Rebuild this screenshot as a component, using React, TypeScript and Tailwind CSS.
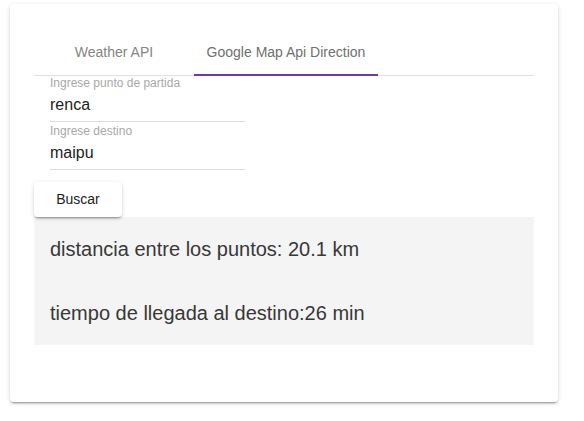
import { useState } from 'react'

const TABS = [
  { label: 'Weather API', width: 'w-[160px]' },
  { label: 'Google Map Api Direction', width: 'w-[184px]' },
]

export default function App() {
  const [tab, setTab] = useState(1)
  const [origin, setOrigin] = useState('renca')
  const [dest, setDest] = useState('maipu')

  return (
    <div className="min-h-screen bg-white pl-[10px] pt-[4px] font-['Liberation_Sans',Arial,sans-serif]">
      <div className="w-[548px] h-[398px] rounded-[4px] bg-white px-[24px] pt-[24px] shadow-[0_3px_1px_-2px_rgba(0,0,0,0.2),0_2px_2px_0_rgba(0,0,0,0.14),0_1px_5px_0_rgba(0,0,0,0.12)]">
        {/* Tabs */}
        <div className="flex h-[48px] w-[500px] border-b border-[#e0e0e0]">
          {TABS.map((t, i) => (
            <button
              key={t.label}
              onClick={() => setTab(i)}
              className={`relative h-full ${t.width} text-[14px] leading-[16px] ${
                tab === i ? 'text-[#707070]' : 'text-[#858585]'
              }`}
            >
              {t.label}
              {tab === i && (
                <span className="absolute left-0 right-0 bottom-[-1px] h-[2px] bg-[#673ab7]" />
              )}
            </button>
          ))}
        </div>

        {/* Inputs */}
        <div className="ml-[16px] w-[195px] flex flex-col">
          <label className="text-[12px] leading-[14px] text-[#a8a8a8]">Ingrese punto de partida</label>
          <input
            value={origin}
            onChange={(e) => setOrigin(e.target.value)}
            className="h-[32px] pt-[4px] pb-[6px] border-b border-[#dcdcdc] text-[16px] leading-[18px] text-[#222] outline-none bg-transparent"
          />
          <label className="mt-[2px] text-[12px] leading-[14px] text-[#a8a8a8]">Ingrese destino</label>
          <input
            value={dest}
            onChange={(e) => setDest(e.target.value)}
            className="h-[32px] pt-[4px] pb-[6px] border-b border-[#dcdcdc] text-[16px] leading-[18px] text-[#222] outline-none bg-transparent"
          />
        </div>

        <button className="relative z-10 mt-[12px] w-[88px] h-[35px] rounded-[4px] bg-white text-[14px] text-[#222] shadow-[0_3px_1px_-2px_rgba(0,0,0,0.2),0_2px_2px_0_rgba(0,0,0,0.14),0_1px_5px_0_rgba(0,0,0,0.12)]">
          Buscar
        </button>

        {/* Result */}
        <div className="w-[500px] bg-[#f4f4f4] px-[16px] py-[20px] flex flex-col gap-[40px] text-[20px] leading-[24px] text-[#383838]">
          <p>distancia entre los puntos: 20.1 km</p>
          <p>tiempo de llegada al destino:26 min</p>
        </div>
      </div>
    </div>
  )
}
